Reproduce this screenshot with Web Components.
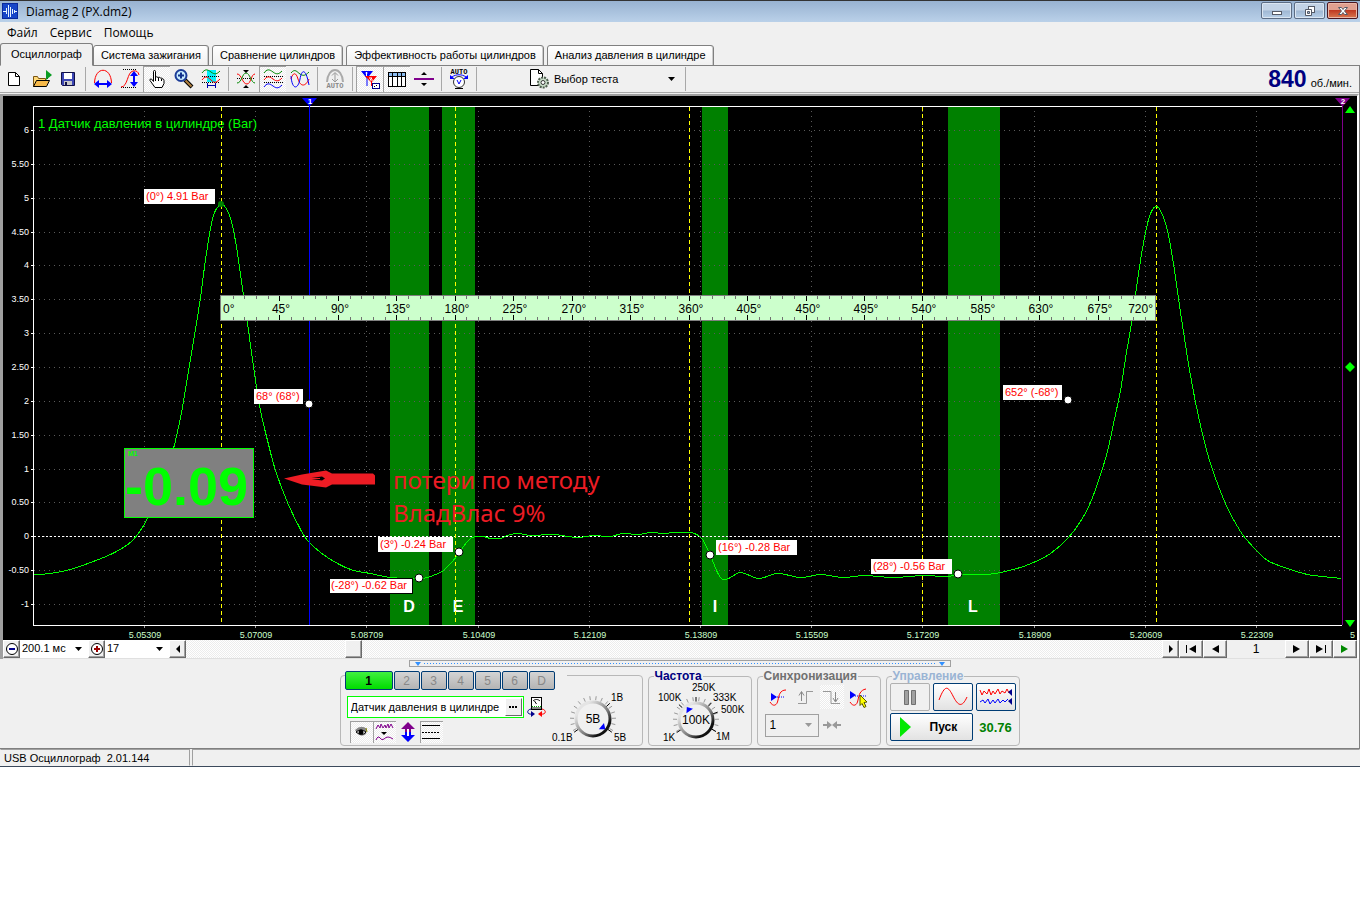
<!DOCTYPE html>
<html lang="ru">
<head>
<meta charset="utf-8">
<title>Diamag 2 (PX.dm2)</title>
<style>
  body { margin: 0; background: #fff; font: 11px/13px "Liberation Sans", Arial, sans-serif; color: #000; }
</style>
</head>
<body>
<dm-window></dm-window>

<script>
const define = (name, html, init) => {
  const tpl = document.createElement('template');
  tpl.innerHTML = html;
  customElements.define(name, class extends HTMLElement {
    constructor() {
      super();
      this.attachShadow({ mode: 'open' }).append(tpl.content.cloneNode(true));
    }
    connectedCallback() { if (init) init(this, this.shadowRoot); }
  });
};

/* ---------- icons ---------- */
const ICONS = {
  app: '<rect x="4" y="4" width="16" height="16" fill="#0a2a9c"/><rect x="5" y="5" width="14" height="14" fill="#1746c8"/><path d="M5 12.500h3M8.500 9v6M10.500 6v12M12.500 8v10M14.500 10v5M16.500 11v3M17 12.500h2" fill="none" stroke="#e8f4ff"/>',
  new: '<path d="M6.500 5.500h7l4 4v9h-11z" fill="#fff" stroke="#000"/><path d="M13.500 5.500v4h4" fill="none" stroke="#000"/>',
  open: '<path d="M4.500 19.500v-10h4l1 2h7v8z" fill="#ffd978" stroke="#7a5410"/><path d="M4.500 19.500l3-6h13l-3 6z" fill="#f6b94a" stroke="#000"/><path d="M18.500 5v7" stroke="#000"/><path d="M17 3l6 5-6 5z" fill="#0a9c22"/>',
  save: '<path d="M5.500 5.500h13v13h-12l-1-1z" fill="#3c46b4" stroke="#101048"/><rect x="8" y="6" width="8" height="6" fill="#fff"/><rect x="8" y="14" width="8" height="4" fill="#c8c8c8"/><rect x="9" y="15" width="2" height="3" fill="#101048"/>',
  width: '<path d="M3.500 16C4 -1 20 -1 20.500 16" fill="none" stroke="#f00"/><path d="M5 17h14" stroke="#00f" stroke-width="2"/><path d="M3 17l5-4v8zM21 17l-5-4v8z" fill="#00f"/>',
  height: '<path d="M3 20.500h16M5 2.500h14" stroke="#000" stroke-dasharray="1 1"/><path d="M3 20c7 0 6-15 12-16q5-1 6 4" fill="none" stroke="#f00"/><path d="M16 7v10" stroke="#00f" stroke-width="2"/><path d="M16 4l4 5h-8zM16 20l4-5h-8z" fill="#00f"/>',
  hand: '<path d="M8.500 14.500V4.500q0-1 1-1t1 1v6q1-1.500 2.500 0q1-1 2.500 .500q1.500-.500 2 1q1.500 0 1.500 1.500v3l-2 4h-7l-5-7q-.500-2 1.500-1.500z" fill="#fff" stroke="#000"/><path d="M10.500 10v4M13.500 11v3M16.500 12v2" stroke="#000"/>',
  zoom: '<path d="M13 13l7 7" stroke="#000" stroke-width="4"/><path d="M13.500 13.500l6 6" stroke="#b08040" stroke-width="2"/><circle cx="9" cy="8.500" r="5.500" fill="#c8ecff" stroke="#1c3c98" stroke-width="2"/><path d="M9 5.500v6M6 8.500h6" stroke="#10308c" stroke-width="2"/>',
  fit: '<rect x="8" y="3" width="9" height="12" fill="#00f0f8"/><path d="M3 6c3-4 5-4 9-1s6 2 9-1" fill="none" stroke="#080"/><path d="M3 9.500h18M3 15.500h18" stroke="#000" stroke-dasharray="1 1"/><path d="M3 13c3-4 5-4 9 0s6 2 9-1" fill="none" stroke="#f00"/><path d="M8.500 16v5M16.500 16v5M9 18.500h7" stroke="#00a"/>',
  center: '<path d="M3 11.500h18" stroke="#000" stroke-dasharray="1 1"/><path d="M3 7c5 0 5 10 10 10 4 0 4-10 8-10" fill="none" stroke="#f00"/><path d="M3 16c5 0 5-10 9-10s5 10 9 10" fill="none" stroke="#080"/><path d="M12 6L9 3h6zM12 18l3 3H9z" fill="#000"/>',
  waves: '<path d="M3 6c3-4 5-4 9-1s6 2 9-1" fill="none" stroke="#080"/><path d="M3 9.500h19M3 15.500h19" stroke="#000" stroke-dasharray="1 1"/><path d="M3 13c3-4 5-4 9-1s6 2 9-1" fill="none" stroke="#f00"/><path d="M3 20c3-4 5-4 9-1s6 2 9-1" fill="none" stroke="#00f"/>',
  overlay: '<path d="M3 6c4-5 6-1 9 1s5 2 9-2" fill="none" stroke="#080"/><path d="M3 12c2-7 5-7 7 0s7 9 11 0" fill="none" stroke="#f00"/><path d="M3 9c1 14 7 14 9 3s6-10 9 6" fill="none" stroke="#00f"/>',
  auto: '<path d="M4 15C5 -1 19 -1 20 15" fill="none" stroke="#aaa" stroke-width="2"/><path d="M12 6v9M9 8.500l3-3 3 3M9 12l3 3 3-3" fill="none" stroke="#999"/><text x="12" y="21" font-size="7" font-weight="700" fill="#888" text-anchor="middle">AUTO</text>',
  markers: '<path d="M3 4h12L9.500 11v8h-1v-8z" fill="#00f"/><path d="M7.500 6h2M8.500 5v4" stroke="#fff"/><path d="M7 9h12l-5 6v4h-1v-4z" fill="#f00"/><path d="M11 11h3l-2 2h3" fill="none" stroke="#fff"/><rect x="14.500" y="16.500" width="7" height="5" fill="#fff" stroke="#00008b"/><path d="M16 19.500h1M18 18.500h1" stroke="#000"/>',
  table: '<rect x="3.500" y="5.500" width="17" height="14" fill="#fff" stroke="#000"/><rect x="4" y="6" width="16" height="3" fill="#8cbcf0"/><path d="M3 9.500h18M7.500 6v14M12.500 6v14M16.500 6v14" stroke="#000"/>',
  split: '<path d="M2 12h20" stroke="#80008c" stroke-width="2"/><path d="M9 8h6l-3-3zM9 16h6l-3 3z" fill="#000"/>',
  autov: '<text x="12" y="7" font-size="7" font-weight="700" fill="#000" text-anchor="middle">AUTO</text><path d="M5 10c4-3 10-3 14 0" fill="none" stroke="#00f"/><path d="M3 8v4h5zM21 8v4h-5z" fill="#00f"/><circle cx="12" cy="15" r="5.500" fill="#fff" stroke="#333"/><path d="M10 13l2 4 2-4" fill="none" stroke="#00f"/><path d="M8 21.500h8" stroke="#000"/>',
  test: '<path d="M3.500 2.500h8l4 4v12h-12z" fill="#fff" stroke="#000"/><path d="M11.500 2.500v4h4" fill="none" stroke="#000"/><circle cx="16" cy="15.500" r="5" fill="#c8dcc8" stroke="#506050" stroke-width="2" stroke-dasharray="2 1"/><circle cx="16" cy="15.500" r="2" fill="#fff" stroke="#333"/>',
  minus: '<circle cx="12" cy="12" r="5.500" fill="#fff" stroke="#000"/><path d="M9 12h6" stroke="#00008b" stroke-width="2"/>',
  plus: '<circle cx="12" cy="12" r="5.500" fill="#fff" stroke="#000"/><path d="M9 12h6M12 9v6" stroke="#900" stroke-width="2"/>',
  left: '<path d="M14 8v8l-4-4z"/>', right: '<path d="M10 8v8l4-4z"/>',
  prev: '<path d="M16 8v8l-7-4z"/>', next: '<path d="M8 8v8l7-4z"/>',
  first: '<path d="M7 8h1v8H7zM17 8v8l-7-4z"/>', last: '<path d="M16 8h1v8h-1zM7 8v8l7-4z"/>',
  run: '<path d="M8 8v8l7-4z" fill="#080"/>',
  dots: '<path d="M8 11h2v2H8zM11 11h2v2h-2zM14 11h2v2h-2z"/>',
  meter: '<rect x="7.500" y="2.500" width="10" height="12" fill="#fff" stroke="#000"/><path d="M9 6c2-2 5-2 7 0M12.500 9l-2-3" fill="none" stroke="#000"/><path d="M8 11.500h9" stroke="#0a0" stroke-dasharray="1 1"/><rect x="8" y="12" width="9" height="2" fill="#888"/><path d="M7 14c-5 1-4 6 1 5" fill="none" stroke="#00008b"/><path d="M7 16l4 3-4 3z" fill="#00008b"/><path d="M18 14c5 1 4 6-1 5" fill="none" stroke="#f00"/><path d="M18 16l-4 3 4 3z" fill="#f00"/>',
  eye: '<path d="M6 10q6-6 12-1l-1 5q-5 4-9-1z" fill="#888"/><path d="M7 12q5-4 10 0-4 5-10 0z" fill="#fff" stroke="#000"/><circle cx="12" cy="12" r="2.500" fill="#000"/><path d="M17 8l1 4" stroke="#880"/>',
  noise: '<path d="M4 9l2-4 2 3 1-4 2 4 2-3 1 3 2-4 1 4 2-4 2 4" fill="none" stroke="#80008c"/><path d="M9 12h6l-3 3z"/><path d="M4 20q2-5 4-2t4 1 4-2 5 2" fill="none" stroke="#80008c"/>',
  updown: '<path d="M12 2l7 7h-4v3H9V9H5z" fill="#80008c"/><path d="M12 22l7-7h-4v-3H9v3H5z" fill="#00f"/><path d="M11 9h2v7h-2z" fill="#fff"/>',
  lines: '<path d="M3 5.500h18M3 18.500h18" stroke="#000"/><path d="M3 12.500h18" stroke="#000" stroke-dasharray="2 1"/>',
  trig: '<path d="M5 8v8l6-4z" fill="#00f"/><path d="M9 12h10" stroke="#00f" stroke-dasharray="1 1"/><path d="M4 17c3 5 7 4 8-2 1-5 2-10 8-10" fill="none" stroke="#f00"/>',
  rise: '<path d="M5 18.500h8.500v-12H20" fill="none" stroke="#999"/><path d="M8.500 16V7M6 10.500l2.500-4 2.500 4" fill="none" stroke="#888"/>',
  fall: '<path d="M3 6.500h8v12h9" fill="none" stroke="#999"/><path d="M15.500 7v9M13 13l2.500 4 2.500-4" fill="none" stroke="#888"/>',
  trigman: '<path d="M3 6v8l6-4z" fill="#00f"/><path d="M8 11h11" stroke="#00f" stroke-dasharray="1 1"/><path d="M3 17c3 5 7 4 8-2 1-5 2-10 8-11" fill="none" stroke="#f00"/><path d="M13 10l7 7-3 .500 2 4-2 1-2-4-2 2z" fill="#ff0" stroke="#550"/>',
  meet: '<path d="M3 12h6M15 12h6" stroke="#999" stroke-width="2"/><path d="M7 8v8l5-4zM17 8v8l-5-4z" fill="#999"/>',
  pause: '<path d="M6.500 5.500h4v14h-4zM13.500 5.500h4v14h-4z" fill="#a0a0a0" stroke="#707070"/>',
};
define('dm-icon', `<style>:host{display:block;flex:none;width:24px;height:24px}svg{display:block;width:24px;height:24px;font-family:"Liberation Mono",monospace}</style><svg viewBox="0 0 24 24" aria-hidden="true"></svg>`,
  (el, root) => { root.querySelector('svg').innerHTML = ICONS[el.getAttribute('name')] || ''; });

/* ---------- title bar, menu, tabs ---------- */
define('dm-titlebar', `<style>
  :host{display:flex;align-items:center;height:22px;box-sizing:border-box;border-top:1px solid #333;background:linear-gradient(#98b2d1,#bad1e9);font:12px/16px "Open Sans","Noto Sans",sans-serif;padding:0 2px 0 0}
  dm-icon{margin:-2px 4px 0 -2px}
  h1{font:inherit;margin:0;flex:1}
  .btns{display:flex;gap:2px;align-self:flex-start;padding-top:1px}
  button{width:31px;height:17px;padding:0;border:1px solid #5c6c84;border-radius:2px;background:linear-gradient(#c3d3e6 48%,#9fb7d3 52%,#b8d0e8);display:grid;place-items:center;box-shadow:inset 0 0 0 1px #dbe6f2}
  button.close{border-color:#4c1620;background:linear-gradient(#e0a090 45%,#c03a22 50%,#d87850);box-shadow:inset 0 0 0 1px #eab8a8}
  svg{display:block;fill:#fff;stroke:#555a66}
</style>
<dm-icon name="app"></dm-icon><h1><slot></slot></h1>
<div class="btns">
<button aria-label="Свернуть"><svg width="12" height="12"><rect x="1.500" y="6.500" width="9" height="3"/></svg></button>
<button aria-label="Восстановить"><svg width="12" height="12"><rect x="4.500" y="1.500" width="6" height="6"/><path d="M1.500 4.500h6v6h-6z"/><path d="M3.500 6.500h2v2h-2z" fill="#9fb7d3"/></svg></button>
<button class="close" aria-label="Закрыть"><svg width="12" height="12"><path d="M1.500 2.500h3l1.500 2 1.500-2h3l-3 3.500 3 3.500h-3l-1.500-2-1.500 2h-3l3-3.500z"/></svg></button>
</div>`);

define('dm-menubar', `<style>
  :host{display:flex;gap:12px;height:21px;padding:0 7px;align-items:center;background:#f0f0f0}
  ::slotted(button){border:0;background:none;padding:0;font:12px/16px "Open Sans","Noto Sans",sans-serif;color:#000}
</style><slot></slot>`);

define('dm-tabs', `<style>
  :host{display:flex;align-items:flex-end;gap:3px;height:23px;background:linear-gradient(#808080,#808080) bottom/100% 1px no-repeat #f0f0f0}
  ::slotted(button){box-sizing:border-box;height:21px;padding:0 7px;border:1px solid #808080;border-radius:3px 3px 0 0;background:linear-gradient(#fff,#f0f0f0);font:11px/13px "Liberation Sans",Arial,sans-serif;color:#000;box-shadow:inset -1px 0 #ccc}
  ::slotted(button[aria-selected=true]){height:23px;padding:0 10px;margin-right:-3px;border-bottom-color:#f0f0f0;background:#f0f0f0;box-shadow:none}
</style><slot></slot>`);

/* ---------- toolbar ---------- */
const DITHER = 'repeating-conic-gradient(#fff 0 25%,#ececec 0 50%) 0 0/2px 2px';
define('dm-tool', `<style>
  :host{display:block;flex:none}
  button{display:grid;place-items:center;width:27px;height:26px;padding:0;border:0;background:none}
  :host([pressed]) button{background:${DITHER};box-shadow:inset 1px 1px #a0a0a0}
</style><button><dm-icon></dm-icon></button>`, (el, root) => {
  const i = root.querySelector('dm-icon');
  i.setAttribute('name', el.getAttribute('icon'));
  i.replaceWith(i.cloneNode());
  const b = root.querySelector('button');
  b.setAttribute('aria-label', el.getAttribute('label'));
  b.disabled = el.hasAttribute('off');
});
define('dm-sep', `<style>:host{display:block;flex:none;width:8px;height:24px;background:linear-gradient(#a8a8a8,#a8a8a8) 4px 0/1px 100% no-repeat}</style>`);

const ARROW = `url("data:image/svg+xml,%3Csvg xmlns='http://www.w3.org/2000/svg' width='7' height='4'%3E%3Cpath d='M0 0h7L3.500 4z'/%3E%3C/svg%3E") right 6px center/7px 4px no-repeat`;
define('dm-toolbar', `<style>
  :host{display:flex;align-items:center;height:26px;background:#f0f0f0;border-bottom:1px solid #a8a8a8}
  .test{display:flex;align-items:center;margin-left:47px;width:154px}
  select{appearance:none;flex:1;height:22px;border:0;padding:0 18px 0 3px;background:${ARROW};font:11px/13px "Liberation Sans",Arial,sans-serif;color:#000}
  output{margin-left:auto;padding-right:7px;display:flex;align-items:baseline;gap:4px}
  b{font-size:23px;line-height:25px;color:#000080}
</style>
<dm-tool icon="new" label="Создать"></dm-tool><dm-tool icon="open" label="Открыть"></dm-tool><dm-tool icon="save" label="Сохранить"></dm-tool><dm-sep></dm-sep>
<dm-tool icon="width" label="По ширине"></dm-tool><dm-tool icon="height" label="По высоте"></dm-tool><dm-tool icon="hand" label="Рука" pressed></dm-tool><dm-tool icon="zoom" label="Увеличить"></dm-tool><dm-tool icon="fit" label="Выделение"></dm-tool><dm-sep></dm-sep>
<dm-tool icon="center" label="Центр"></dm-tool><dm-tool icon="waves" label="Раздельно" pressed></dm-tool><dm-tool icon="overlay" label="Вместе"></dm-tool><dm-sep></dm-sep>
<dm-tool icon="auto" label="Авто" off></dm-tool><dm-sep></dm-sep>
<dm-tool icon="markers" label="Маркеры" pressed></dm-tool><dm-tool icon="table" label="Таблица" pressed></dm-tool><dm-tool icon="split" label="Уровень"></dm-tool><dm-sep></dm-sep>
<dm-tool icon="autov" label="Автоподбор"></dm-tool><dm-sep></dm-sep>
<div class="test"><dm-icon name="test"></dm-icon><select aria-label="Выбор теста"><option>Выбор теста</option></select></div><dm-sep></dm-sep>
<output><b>840</b><span>об./мин.</span></output>`);

/* ---------- oscilloscope chart ---------- */
const CURVE = [[34,574],[50,573],[70,569],[90,562],[112,553],[132,540],[147,518],[160,487],[173,448],[181,412],[187,377],[194,335],[200,297],[205,259],[211,223],[215,210],[221,204],[227,210],[232,225],[237,253],[243,295],[247,323],[255,380],[260,410],[267,440],[275,470],[287,502],[300,529],[307,540],[320,552],[337,563],[353,570],[370,573],[390,577],[418,578],[427,577],[435,574],[443,570],[450,563],[457,555],[463,546],[470,538],[475,536],[483,536],[490,538],[500,538],[507,535],[517,533],[530,535],[553,534],[577,537],[593,535],[610,536],[622,533],[638,534],[650,532],[663,533],[673,532],[690,532],[696,534],[702,539],[710,555],[717,572],[722,579],[728,578],[740,572],[758,578],[777,573],[800,577],[820,574],[843,577],[863,575],[893,577],[923,575],[947,576],[960,574],[987,574],[1013,569],[1033,562],[1050,553],[1068,537],[1080,521],[1090,502],[1098,480],[1107,451],[1113,423],[1120,390],[1125,358],[1131,322],[1137,280],[1142,248],[1148,219],[1152,209],[1156,206],[1160,210],[1166,226],[1171,251],[1175,277],[1180,312],[1190,375],[1200,425],[1210,463],[1225,503],[1240,531],[1254,548],[1267,560],[1287,568],[1307,574],[1322,576],[1341,578]];
const LEVELS = ['6','5.50','5','4.50','4','3.50','3','2.50','2','1.50','1','0.50','0','-0.50','-1'];
const TIMES = ['5.05309','5.07009','5.08709','5.10409','5.12109','5.13809','5.15509','5.17209','5.18909','5.20609','5.22309'];
const BANDS = [[390,39,'D',409],[442,33,'E',458],[702,26,'I',715],[948,52,'L',973]];
const CALLOUTS = [[144,189,71,'(0°) 4.91 Bar'],[254,389,49,'68° (68°)'],[378,537,75,'(3°) -0.24 Bar'],[329,578,83,'(-28°) -0.62 Bar'],[716,540,81,'(16°) -0.28 Bar'],[871,559,81,'(28°) -0.56 Bar'],[1003,385,59,'652° (-68°)']];
const DOTS = [[309,404],[1068,400],[459,552],[419,578],[710,555],[958,574]];

define('dm-scope', `<style>
  :host{display:block;height:544px;background:#000;overflow:hidden}
  svg{display:block;font-family:"Liberation Sans",Arial,sans-serif}
  .c{shape-rendering:crispEdges}
</style><svg role="img" aria-label="Осциллограмма давления в цилиндре"></svg>`, (el, root) => {
  const svg = root.querySelector('svg');
  const draw = () => {
    const w = el.clientWidth, k = (w - 45) / 1309;
    const X = x => 33 + (x - 33) * k;
    const P = x => Math.round(X(x));
    const R = P(1342);
    const text = (x, y, s, size, fill, anchor = 'start', extra = '') =>
      `<text x="${x}" y="${y}" font-size="${size}" fill="${fill}" text-anchor="${anchor}" ${extra}>${s}</text>`;
    let o = '';
    for (const [x, bw] of BANDS) o += `<rect class="c" x="${P(x)}" y="107" width="${Math.round(bw * k)}" height="518" fill="#008000"/>`;
    LEVELS.forEach((s, i) => {
      const y = 130 + Math.round(i * 33.86);
      o += `<path class="c" d="M34 ${y}.500H${R}" stroke="#5a5a5a" stroke-dasharray="1 4"/><path d="M31 ${y}.500h3" stroke="#fff"/>` + text(29, y + 3, s, 9, '#fff', 'end');
    });
    TIMES.forEach((s, i) => {
      const x = P(144 + i * 111.2);
      o += `<path class="c" d="M${x}.500 111V625" stroke="#5a5a5a" stroke-dasharray="1 4"/><path d="M${x}.500 626v2" stroke="#999"/>` + text(x + 1, 638, s, 9, '#ccffcc', 'middle');
    });
    o += text(R + 8, 638, '5', 9, '#ccffcc');
    o += `<path class="c" d="M34 536.500H${R}" stroke="#fff" stroke-dasharray="2 2"/>`;
    o += text(38, 128, '1 Датчик давления в цилиндре (Bar)', 13, '#00ff00');
    for (const [x, , s, lx] of BANDS) o += text(P(lx), 612, s, 16, '#fff', 'middle', 'font-weight="700"');
    for (const x of [221, 455, 689, 922, 1156]) o += `<path class="c" d="M${P(x)}.500 107V625" stroke="#ff0" stroke-dasharray="4 3"/>`;
    const p = CURVE.map(([x, y]) => [X(x) + .5, y + .5]);
    const slope = p.map((q, i) => {
      const a = p[i - 1] || q, b = p[i + 1] || q;
      return (b[1] - a[1]) / (b[0] - a[0]);
    });
    let d = `M${p[0]}`;
    for (let i = 0; i < p.length - 1; i++) {
      const b = p[i], c = p[i + 1], h = (c[0] - b[0]) / 3;
      d += `C${b[0] + h} ${b[1] + slope[i] * h} ${c[0] - h} ${c[1] - slope[i + 1] * h} ${c}`;
    }
    o += `<path class="c" d="${d}" fill="none" stroke="#00ff00"/>`;
    o += `<path class="c" d="M33.500 626V106.500H${R}M33 625.500H${R}" fill="none" stroke="#fff"/>`;
    const marker = (x, s, col) => `<path class="c" d="M${x}.500 104V625" stroke="${col}"/><path d="M${x - 7} 98h15l-7 8h-1z" fill="${col}"/>` + text(x + 1, 104, s, 8, '#fff', 'middle', 'font-weight="700"');
    o += marker(P(309), '1', '#0000ff') + marker(R, '2', '#80008c');
    const g = R + 8;
    o += `<path d="M${g} 106l5 7h-10zM${g} 362l5 5-5 5-5-5zM${g} 627l5-7h-10z" fill="#00ff00"/>`;
    const r0 = P(221);
    o += `<rect class="c" x="${r0 - 1}.500" y="295.500" width="${P(1155) - r0 + 1}" height="25" fill="#ccffcc" stroke="#808080"/>`;
    for (let i = 1; i < 80; i++) {
      const x = P(221 + i * 11.69), big = i % 5 === 0;
      o += `<path class="c" d="M${x}.500 296v${big ? 5 : 3}M${x}.500 320v-${big ? 5 : 3}" stroke="${big ? '#000' : '#707070'}"/>`;
      if (big) o += text(x + 2, 313, i * 9 + '°', 12, '#000', 'middle');
    }
    o += text(r0 + 2, 313, '0°', 12, '#000') + text(P(1153), 313, '720°', 12, '#000', 'end');
    for (const [x, y, bw, s] of CALLOUTS) o += `<rect class="c" x="${P(x)}" y="${y}" width="${bw}" height="15" fill="#fff" ${s[1] === '-' ? 'stroke="#000"' : ''}/>` + text(P(x) + 2, y + 11, s, 11, '#f00');
    for (const [x, y] of DOTS) o += `<circle cx="${P(x)}" cy="${y}" r="4" fill="#fff" stroke="#000"/>`;
    o += `<circle cx="${r0}" cy="204" r="3" fill="#008000"/>`;
    const m = P(124);
    o += `<rect class="c" x="${m}.500" y="448.500" width="129" height="69" fill="#808080" stroke="#00ff00"/>` + text(m + 4, 456, 'M1', 7, '#00ff00', 'start', 'font-weight="700"') + text(m + 1, 505, '-0.09', 54, '#00ff00', 'start', 'font-weight="700"');
    const a = P(284);
    o += `<path d="M${a} 478.500l18-4 24-4 6 3h41l2 2v9h-43l-6 3-24-3z" fill="#ed1c24"/><path d="M${a + 24} 478.500l14-2 3 2-3 2z" fill="#000"/><path d="M${a + 24} 478.500h12" stroke="#ed1c24"/>`;
    const f = 'font-family="Noto Sans, Open Sans, sans-serif"';
    o += text(P(393), 489, 'потери по методу', 24, '#ed1c24', 'start', f) + text(P(393), 522, 'ВладВлас 9%', 24, '#ed1c24', 'start', f);
    svg.setAttribute('width', w);
    svg.setAttribute('height', 544);
    svg.setAttribute('viewBox', `3 96 ${w} 544`);
    svg.innerHTML = o;
  };
  draw();
  new ResizeObserver(draw).observe(el);
});

/* ---------- scroll row under the chart ---------- */
define('dm-scrollrow', `<style>
  :host{display:flex;height:18px;background:#fff;border-bottom:1px solid #e0e0e0}
  button{flex:none;box-sizing:border-box;width:24px;height:18px;padding:0;border:1px solid;border-color:#fff #696969 #696969 #fff;box-shadow:inset -1px -1px #a0a0a0;background:#f0f0f0;display:grid;place-items:center;overflow:hidden}
  button.s{width:17px}
  dm-icon{margin:-5px}
  select{appearance:none;box-sizing:border-box;height:18px;border:0;padding:0 0 1px 2px;background:${ARROW} #fff;font:11px/13px "Liberation Sans",Arial,sans-serif;color:#000}
  .scale{width:68px}.n{width:64px}
  input{appearance:none;flex:1;min-width:0;height:18px;margin:0;background:${DITHER}}
  input::-webkit-slider-thumb{appearance:none;box-sizing:border-box;width:17px;height:18px;border:1px solid;border-color:#fff #696969 #696969 #fff;box-shadow:inset -1px -1px #a0a0a0;background:#f0f0f0}
  output{width:58px;background:#f0f0f0;text-align:center;line-height:18px;font-size:12px}
</style>
<button class="s" aria-label="Меньше"><dm-icon name="minus"></dm-icon></button>
<select class="scale" aria-label="Развёртка"><option>200.1 мс</option></select>
<button class="s" aria-label="Больше"><dm-icon name="plus"></dm-icon></button>
<select class="n" aria-label="Кадр"><option>17</option></select>
<button class="s" aria-label="Влево"><dm-icon name="left"></dm-icon></button>
<input type="range" min="0" max="1000" value="166" aria-label="Прокрутка">
<button class="s" aria-label="Вправо"><dm-icon name="right"></dm-icon></button>
<button aria-label="В начало"><dm-icon name="first"></dm-icon></button>
<button aria-label="Назад"><dm-icon name="prev"></dm-icon></button>
<output>1</output>
<button aria-label="Вперёд"><dm-icon name="next"></dm-icon></button>
<button aria-label="В конец"><dm-icon name="last"></dm-icon></button>
<button aria-label="Воспроизвести"><dm-icon name="run"></dm-icon></button>`);

define('dm-splitter', `<style>
  :host{display:flex;justify-content:center;height:8px;padding-top:1px;box-sizing:border-box;background:#f0f0f0}
  button{box-sizing:border-box;width:542px;height:7px;padding:0 5px;border:1px solid #a0a0a0;background:#f0f0f0;display:flex;align-items:center;gap:3px}
  i{border:3px solid transparent;border-top:4px solid #3090ff;border-bottom:0}
  span{flex:1;height:1px;background:repeating-linear-gradient(90deg,#3090ff 0 1px,transparent 1px 3px)}
</style><button aria-label="Свернуть панель"><i></i><span></span><i></i></button>`);

/* ---------- bottom control groups ---------- */
define('dm-group', `<style>
  :host{display:block;flex:none}
  fieldset{box-sizing:border-box;height:76px;min-width:0;margin:0;padding:0 3px;border:1px solid #b8b8b8;border-radius:4px}
  legend{padding:0 1px;margin-left:2px;font:bold 12px/12px "Liberation Sans",Arial,sans-serif;color:var(--legend,#000080)}
</style><fieldset><legend></legend><slot></slot></fieldset>`, (el, root) => {
  root.querySelector('legend').textContent = el.getAttribute('label');
});

define('dm-knob', `<style>:host{display:block}svg{display:block;font:10px "Liberation Sans",Arial,sans-serif}</style>
<svg><defs><linearGradient id="rim" x1="0" y1="0" x2="1" y2="1"><stop offset=".2" stop-color="#e4e4e4"/><stop offset=".6" stop-color="#777"/><stop offset=".8" stop-color="#111"/></linearGradient></defs><g></g></svg>`, (el, root) => {
  const svg = root.querySelector('svg');
  const [w, h, cx, cy] = el.getAttribute('box').split(' ').map(Number);
  svg.setAttribute('width', w); svg.setAttribute('height', h);
  const labels = JSON.parse(el.getAttribute('marks'));
  let o = '';
  for (let a = -120; a <= 120; a += 16) {
    const r = a * Math.PI / 180, s = Math.sin(r), c = -Math.cos(r);
    o += `<path d="M${cx + s * 19} ${cy + c * 19}L${cx + s * 23} ${cy + c * 23}" stroke="#999"/>`;
  }
  for (const [s, x, y, ang] of labels) {
    const r = ang * Math.PI / 180;
    o += `<text x="${x}" y="${y}">${s}</text><path d="M${cx + Math.sin(r) * 18} ${cy - Math.cos(r) * 18}L${cx + Math.sin(r) * 23} ${cy - Math.cos(r) * 23}" stroke="#000"/>`;
  }
  const t = +el.getAttribute('angle');
  o += `<circle cx="${cx}" cy="${cy}" r="17" fill="#f0f0f0" stroke="url(#rim)" stroke-width="3"/>`;
  o += `<path d="M-4 -11h8l-4 -5z" fill="#00f" transform="translate(${cx} ${cy}) rotate(${t})"/>`;
  o += `<text x="${cx}" y="${cy + 4}" font-size="12" text-anchor="middle">${el.getAttribute('value')}</text>`;
  root.querySelector('g').innerHTML = o;
});

define('dm-channels', `<style>
  :host{display:block;flex:none;width:303px}
  .box{box-sizing:border-box;height:71px;margin-top:5px;border:1px solid #b8b8b8;border-radius:4px;display:flex}
  .left{box-sizing:border-box;width:209px;flex:none;padding-left:4px}
  .row{display:flex;align-items:center}
  .ch{box-sizing:border-box;gap:1px;width:222px;padding-right:12px;margin:-5px 0 0;background:#f0f0f0}
  .ch button{box-sizing:border-box;flex:1;height:19px;padding:0;border:1px solid #003c74;border-radius:2px;background:linear-gradient(#d4d4d4,#b4b4b4);font:12px/14px "Liberation Sans",Arial,sans-serif;color:#888}
  .ch button.on{flex:none;width:48px;background:linear-gradient(#40f040,#00dc00);color:#000;font-weight:700}
  .src{margin:5px 0 0 2px}
  .field{flex:none;display:flex;box-sizing:border-box;width:177px;height:22px;border:1px solid #00ff00;background:#fff;padding:1px}
  input{flex:1;min-width:0;border:0;padding:0 2px;background:none;font:11px/13px "Liberation Sans",Arial,sans-serif}
  .field button{width:17px;height:18px;padding:0;border:1px solid;border-color:#fff #696969 #696969 #fff;background:#f0f0f0;display:grid;place-items:center;overflow:hidden}
  .field dm-icon{margin:-5px}
  .t{margin:2px 0 0 5px}
  .t button,.m{flex:none;border:0;padding:0;width:24px;height:22px;background:none;display:grid;place-items:center;overflow:hidden}
  .t dm-icon{margin:-1px}
  .t .p{background:${DITHER};box-shadow:inset 1px 1px #a0a0a0;width:23px}
  .m{height:24px}
</style>
<div class="box"><div class="left">
<div class="row ch"><button class="on">1</button><button>2</button><button>3</button><button>4</button><button>5</button><button>6</button><button>D</button></div>
<div class="row src"><div class="field"><input aria-label="Датчик" value="Датчик давления в цилиндре"><button aria-label="Выбрать датчик"><dm-icon name="dots"></dm-icon></button></div><button class="m" aria-label="Прибор"><dm-icon name="meter"></dm-icon></button></div>
<div class="row t"><button class="p" aria-label="Видимость"><dm-icon name="eye"></dm-icon></button><button class="p" aria-label="Фильтр"><dm-icon name="noise"></dm-icon></button><button aria-label="Инверсия"><dm-icon name="updown"></dm-icon></button><button class="p" aria-label="Линии"><dm-icon name="lines"></dm-icon></button></div>
</div>
<dm-knob box="91 69 43 43" value="5В" angle="130" marks='[["1В",61,25,47],["5В",64,65,125],["0.1В",2,65,235]]'></dm-knob>
</div>`);

define('dm-controls', `<style>
  :host{display:grid;grid-template-columns:40px 40px 40px;gap:2px 3px;padding-top:1px}
  button{box-sizing:border-box;height:28px;padding:0;border:1px solid #003c74;border-radius:2px;background:linear-gradient(#fff,#e2e2e2);display:grid;place-items:center;overflow:hidden}
  button:disabled{border-color:#b0b0b0;background:#f0f0f0}
  .go{grid-column:span 2;display:flex;align-items:center;gap:19px;padding-left:9px;font:bold 12px/14px "Liberation Sans",Arial,sans-serif;color:#000}
  output{align-self:center;justify-self:center;font:bold 13px/15px "Liberation Sans",Arial,sans-serif;color:#008000}
  path{fill:none}
</style>
<button disabled aria-label="Пауза"><dm-icon name="pause"></dm-icon></button>
<button aria-label="Один сигнал"><svg width="32" height="20"><path d="M2 13C8-3 11-1 16 9s9 12 14 1" stroke="#f00"/></svg></button>
<button aria-label="Несколько сигналов"><svg width="34" height="22"><path d="M1 4l2 5 2-4 3 3 2-5 2 6 2-4 2 3 3-5 2 5 2-3 3 2 2-4 2 4" stroke="#f00"/><path d="M1 16l3-2 2 3 3-4 2 5 3-4 2 3 3-4 2 4 3-3 2 2 3-3" stroke="#00f"/><path d="M33 3v7l-4-4zM33 12v7l-4-4z" style="fill:#00008b"/></svg></button>
<button class="go"><svg width="11" height="20"><path d="M0 0v20l11-10z" style="fill:#00e800"/></svg>Пуск</button>
<output>30.76</output>`);

define('dm-sync', `<style>
  :host{display:grid;grid-template-columns:repeat(4,24px);gap:4px 3px;padding:3px 0 0 5px;align-items:center}
  button{border:0;padding:0;width:24px;height:24px;background:none}
  select{appearance:none;grid-column:span 2;box-sizing:border-box;width:54px;height:23px;margin-left:-1px;border:1px solid #a0a0a0;padding:0 4px;background:url("data:image/svg+xml,%3Csvg xmlns='http://www.w3.org/2000/svg' width='7' height='4'%3E%3Cpath fill='%23999' d='M0 0h7L3.500 4z'/%3E%3C/svg%3E") right 6px center/7px 4px no-repeat #f0f0f0;font:12px/14px "Liberation Sans",Arial,sans-serif;color:#000}
  .d{background:${DITHER}}
</style>
<button aria-label="Автоматический запуск"><dm-icon name="trig"></dm-icon></button><button aria-label="Фронт"><dm-icon name="rise"></dm-icon></button><button class="d" aria-label="Спад"><dm-icon name="fall"></dm-icon></button><button aria-label="Ручной уровень"><dm-icon name="trigman"></dm-icon></button>
<select aria-label="Канал синхронизации"><option>1</option></select><button aria-label="Совместить"><dm-icon name="meet"></dm-icon></button>`);

define('dm-statusbar', `<style>
  :host{display:flex;gap:2px;height:18px;box-sizing:border-box;background:#f0f0f0;border-bottom:1px solid #3c4a5c}
  div{box-sizing:border-box;border:1px solid;border-color:#a0a0a0 #a0a0a0 #f0f0f0 #f0f0f0;padding:2px 3px;width:190px;white-space:pre}
  div+div{flex:1;border-color:#a0a0a0 #f0f0f0 #f0f0f0 #a0a0a0}
</style><div><slot></slot></div><div></div>`);

define('dm-window', `<style>
  :host{display:block;background:#f0f0f0}
  main{display:flex;flex-direction:column;border:solid #808080;border-width:0 1px 1px 0}
  .frame{border:solid #a0a0a0;border-width:2px 2px 0 3px;border-right-color:#fff;margin-top:1px}
  .panel{display:flex;justify-content:center;gap:5px;height:78px;padding-top:3px;background:#f0f0f0}
  .freq{width:104px}.sync{width:124px;--legend:#707070}.ctl{width:134px;--legend:#9ab4d4}
</style>
<dm-titlebar>Diamag 2 (PX.dm2)</dm-titlebar>
<dm-menubar><button>Файл</button><button>Сервис</button><button>Помощь</button></dm-menubar>
<dm-tabs role="tablist"><button role="tab" aria-selected="true">Осциллограф</button><button role="tab">Система зажигания</button><button role="tab">Сравнение цилиндров</button><button role="tab">Эффективность работы цилиндров</button><button role="tab">Анализ давления в цилиндре</button></dm-tabs>
<main>
<dm-toolbar></dm-toolbar>
<div class="frame"><dm-scope></dm-scope><dm-scrollrow></dm-scrollrow></div>
<dm-splitter></dm-splitter>
<div class="panel">
<dm-channels></dm-channels>
<dm-group class="freq" label="Частота"><dm-knob box="98 66 44 38" value="100K" angle="-35" marks='[["250K",40,9,0],["100K",6,19,-48],["333K",61,19,42],["500K",69,31,70],["1M",64,58,120],["1K",11,59,237]]'></dm-knob></dm-group>
<dm-group class="sync" label="Синхронизация"><dm-sync></dm-sync></dm-group>
<dm-group class="ctl" label="Управление"><dm-controls></dm-controls></dm-group>
</div>
</main>
<dm-statusbar>USB Осциллограф  2.01.144</dm-statusbar>`);
</script>
</body>
</html>
